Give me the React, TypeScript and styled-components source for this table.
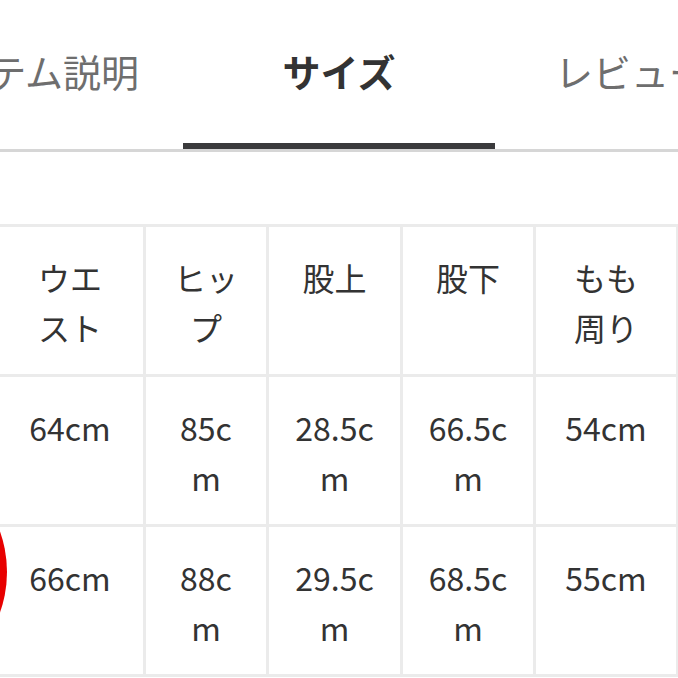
import React from "react";
import styled, { createGlobalStyle } from "styled-components";

const Global = createGlobalStyle`
  html, body {
    margin: 0;
    padding: 0;
    background: #ffffff;
    overflow: hidden;
  }
  body {
    font-family: "Noto Sans CJK JP", "Noto Sans", sans-serif;
    color: #333333;
  }
`;

const Page = styled.div`
  width: 678px;
  height: 678px;
  overflow: hidden;
  background: #ffffff;
`;

const TabBar = styled.div`
  display: flex;
  border-bottom: 3px solid #d6d6d6;
`;

const TabList = styled.div`
  display: flex;
  margin-left: -129px;
`;

const Tab = styled.div<{ $active?: boolean; $align?: "center" | "left" }>`
  flex: 0 0 312px;
  box-sizing: border-box;
  height: 149px;
  padding-top: 47px;
  padding-left: ${(p) => (p.$align === "left" ? "60px" : "0")};
  text-align: ${(p) => p.$align ?? "center"};
  white-space: nowrap;
  font-size: 38px;
  line-height: 48px;
  font-weight: ${(p) => (p.$active ? 700 : 400)};
  color: ${(p) => (p.$active ? "#333333" : "#6e6e6e")};
  border-bottom: 6px solid ${(p) => (p.$active ? "#3a3a3c" : "transparent")};
`;

const TableWrap = styled.div`
  position: relative;
  margin-top: 72px;
  margin-left: -6px;
`;

const Grid = styled.div`
  display: grid;
  grid-template-columns: 146px 120px 131px 130px 140px;
  grid-auto-rows: 147px;
  gap: 3px;
  padding: 3px;
  background: #ebebeb;
  width: max-content;
`;

const Cell = styled.div<{ $inset: number }>`
  background: #ffffff;
  box-sizing: border-box;
  padding: 25px ${(p) => p.$inset}px 0;
  text-align: center;
  font-size: 32px;
  line-height: 50px;
  color: #333333;
  word-break: break-all;
  overflow-wrap: anywhere;
`;

const Marker = styled.div`
  position: absolute;
  left: -227px;
  top: 228px;
  width: 240px;
  height: 240px;
  border-radius: 50%;
  background: #e80000;
`;

const insets = [30, 25, 25, 25, 25];

const rows: string[][] = [
  ["ウエスト", "ヒップ", "股上", "股下", "もも周り"],
  ["64cm", "85cm", "28.5cm", "66.5cm", "54cm"],
  ["66cm", "88cm", "29.5cm", "68.5cm", "55cm"],
];

export default function App() {
  return (
    <Page>
      <Global />
      <TabBar>
        <TabList>
          <Tab>アイテム説明</Tab>
          <Tab $active>サイズ</Tab>
          <Tab $align="left">レビュー</Tab>
        </TabList>
      </TabBar>
      <TableWrap>
        <Grid>
          {rows.map((r, i) =>
            r.map((c, j) => (
              <Cell key={`${i}-${j}`} $inset={insets[j]}>
                {c}
              </Cell>
            ))
          )}
        </Grid>
        <Marker />
      </TableWrap>
    </Page>
  );
}
